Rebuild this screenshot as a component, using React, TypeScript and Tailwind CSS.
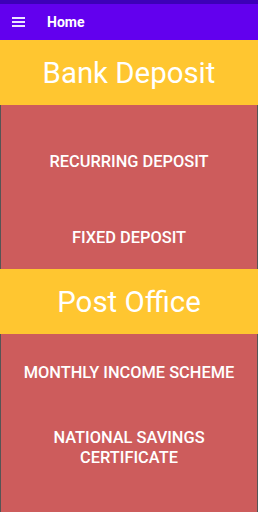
export default function App() {
  return (
    <div
      className="w-[258px] h-[512px] overflow-hidden flex flex-col bg-white"
      style={{ fontFamily: "Roboto, 'Liberation Sans', sans-serif" }}
    >
      {/* status bar */}
      <div className="h-[4px] bg-[#3d00b8] shrink-0" />

      {/* app bar */}
      <div className="h-[36px] bg-[#6200ee] flex items-center shrink-0">
        <div className="ml-[12px] w-[13px] flex flex-col gap-[2px]">
          <div className="h-[2px] bg-[#ece4ff]" />
          <div className="h-[2px] bg-[#ece4ff]" />
          <div className="h-[2px] bg-[#ece4ff]" />
        </div>
        <span className="ml-[22px] text-white text-[14px] font-bold">Home</span>
      </div>

      {/* Bank Deposit */}
      <div className="h-[65px] bg-[#ffc630] flex items-center justify-center shrink-0">
        <span className="text-white text-[29.4px] leading-none mt-[2px]">Bank Deposit</span>
      </div>
      <div className="h-[164px] bg-[#cd5c5c] border-x border-[#555] shrink-0 flex flex-col items-center pt-[48px] text-white text-[16.4px] font-medium leading-[18px]">
        <span>RECURRING DEPOSIT</span>
        <span className="mt-[58px]">FIXED DEPOSIT</span>
      </div>

      {/* Post Office */}
      <div className="h-[65px] bg-[#ffc630] flex items-center justify-center shrink-0">
        <span className="text-white text-[29.4px] leading-none mt-[2px]">Post Office</span>
      </div>
      <div className="flex-1 bg-[#cd5c5c] border-x border-[#555] flex flex-col items-center pt-[30px] text-white text-[16.4px] font-medium leading-[18px] text-center">
        <span>MONTHLY INCOME SCHEME</span>
        <span className="mt-[46px] leading-[20px]">
          NATIONAL SAVINGS
          <br />
          CERTIFICATE
        </span>
      </div>
    </div>
  );
}
